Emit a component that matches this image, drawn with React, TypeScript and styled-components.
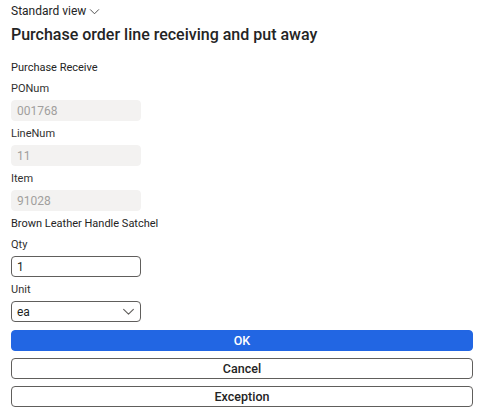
import React from "react";
import styled, { createGlobalStyle } from "styled-components";

const Global = createGlobalStyle`
  html, body { margin: 0; padding: 0; background: #ffffff; }
  body { font-family: Roboto, "Open Sans", sans-serif; color: #242424; }
  * { box-sizing: border-box; }
`;

const Page = styled.div`
  display: flex;
  flex-direction: column;
  padding: 3px 8px 0 11px;
`;

const ViewSwitch = styled.div`
  display: flex;
  align-items: center;
  gap: 3px;
  font-size: 12px;
  height: 16px;
  color: #242424;
`;

const Title = styled.h1`
  margin: 5px 0 0;
  font-size: 16px;
  font-weight: 500;
  line-height: 22px;
  color: #242424;
`;

const Form = styled.div`
  display: flex;
  flex-direction: column;
  margin-top: 14px;
`;

const Caption = styled.div`
  font-size: 11px;
  line-height: 16px;
  color: #242424;
  margin-bottom: 5px;
`;

const Field = styled.div`
  display: flex;
  flex-direction: column;
  gap: 3px;
  margin-bottom: 5px;
`;

const Label = styled.div`
  font-size: 11px;
  line-height: 16px;
  color: #323130;
`;

const Box = styled.div<{ $readonly?: boolean }>`
  width: 130px;
  height: 21px;
  border-radius: 4px;
  display: flex;
  align-items: center;
  justify-content: space-between;
  padding: 0 5px;
  font-size: 12px;
  background: ${(p) => (p.$readonly ? "#f3f2f1" : "#ffffff")};
  border: 1px solid ${(p) => (p.$readonly ? "#f3f2f1" : "#605e5c")};
  color: ${(p) => (p.$readonly ? "#a19f9d" : "#201f1e")};
`;

const Buttons = styled.div`
  display: flex;
  flex-direction: column;
  gap: 7px;
  margin-top: 3px;
`;

const Button = styled.div<{ $primary?: boolean }>`
  height: 21px;
  border-radius: 4px;
  display: flex;
  align-items: center;
  justify-content: center;
  font-size: 12.5px;
  font-weight: 500;
  background: ${(p) => (p.$primary ? "#2266e3" : "#ffffff")};
  color: ${(p) => (p.$primary ? "#ffffff" : "#242424")};
  border: 1px solid ${(p) => (p.$primary ? "#2266e3" : "#605e5c")};
`;

const Chevron = ({ size = 12, color = "#605e5c" }: { size?: number; color?: string }) => (
  <svg width={size} height={size} viewBox="0 0 12 12" fill="none">
    <path d="M1.5 4 L6 8.5 L10.5 4" stroke={color} strokeWidth="1" strokeLinecap="round" strokeLinejoin="round" />
  </svg>
);

export default function App() {
  return (
    <>
      <Global />
      <Page>
        <ViewSwitch>
          Standard view <Chevron size={11} color="#424242" />
        </ViewSwitch>
        <Title>Purchase order line receiving and put away</Title>
        <Form>
          <Caption>Purchase Receive</Caption>
          <Field>
            <Label>PONum</Label>
            <Box $readonly>001768</Box>
          </Field>
          <Field>
            <Label>LineNum</Label>
            <Box $readonly>11</Box>
          </Field>
          <Field>
            <Label>Item</Label>
            <Box $readonly>91028</Box>
          </Field>
          <Caption>Brown Leather Handle Satchel</Caption>
          <Field>
            <Label>Qty</Label>
            <Box>1</Box>
          </Field>
          <Field>
            <Label>Unit</Label>
            <Box>
              ea <Chevron size={13} />
            </Box>
          </Field>
        </Form>
        <Buttons>
          <Button $primary>OK</Button>
          <Button>Cancel</Button>
          <Button>Exception</Button>
        </Buttons>
      </Page>
    </>
  );
}
